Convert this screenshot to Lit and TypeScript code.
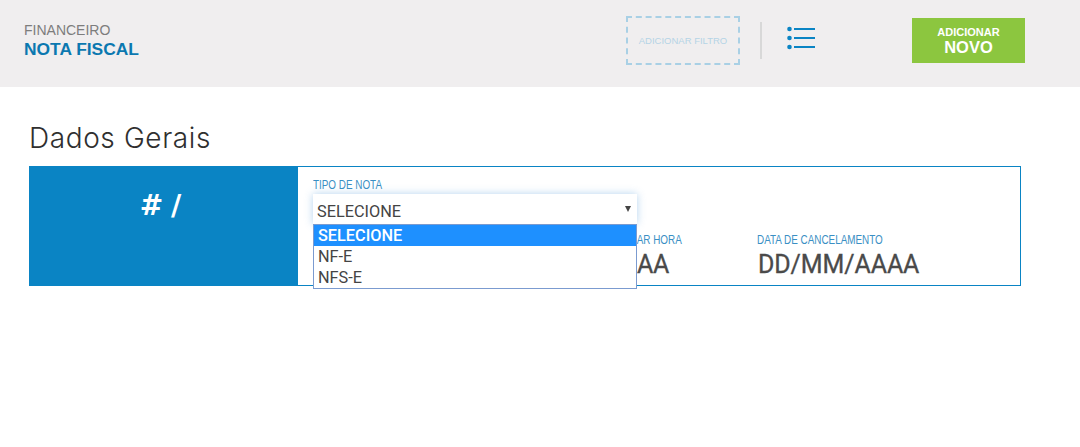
import { LitElement, html, css } from "lit";
import { customElement } from "lit/decorators.js";

@customElement("app-root")
export class AppRoot extends LitElement {
  static styles = css`
    :host { display: block; width: 1080px; height: 447px; background: #fff; overflow: hidden; font-family: "Liberation Sans", Arial, sans-serif; }
    .top { height: 87px; background: #f0eeef; display: flex; align-items: flex-start; box-sizing: border-box; padding-left: 24px; }
    .crumb { width: 602px; padding-top: 23px; }
    .crumb .a { font-size: 14px; line-height: 15px; color: #7d7d7d; }
    .crumb .b { font-size: 17.4px; line-height: 22px; font-weight: 700; color: #0b78b0; }
    .filter { margin-top: 16px; width: 114px; height: 49px; box-sizing: border-box; border: 2px dashed #a9d0e5; display: flex; align-items: center; justify-content: center; font-size: 9.5px; color: #b5d4e6; }
    .sep { margin: 22px 0 0 20px; width: 2px; height: 37px; background: #d8d8d8; }
    .list { margin: 26px 0 0 25px; display: block; }
    .add { margin: 18px 0 0 97px; width: 113px; height: 45px; background: #8cc63f; color: #fff; font-weight: 700; text-align: center; display: flex; flex-direction: column; justify-content: center; }
    .add .s { font-size: 11px; line-height: 13px; }
    .add .l { font-size: 16.5px; line-height: 16px; }
    h1 { margin: 35px 0 0 29px; font: 300 28px/32px "Inter", sans-serif; color: #2f2f2f; letter-spacing: 0.6px; height: 44px; }
    .card { margin-left: 29px; width: 992px; height: 120px; box-sizing: border-box; border: 1px solid #0a84c4; display: flex; }
    .id { width: 263px; padding-right: 6px; background: #0a84c4; margin: -1px 0 -1px -1px; color: #fff; font: 700 28px/34px "DejaVu Sans", sans-serif; text-align: center; padding-top: 23px; height: 97px; box-sizing: content-box; word-spacing: -2px; }
    .main { position: relative; flex: 1; padding: 11px 0 0 15px; }
    .label { font: 13px/14px "Liberation Sans", sans-serif; color: #3a8fc4; white-space: nowrap; transform: scaleX(0.76); transform-origin: left center; }
    .select { position: relative; margin-top: 2px; width: 324px; height: 30px; box-sizing: border-box; background: #fff; padding: 8px 0 0 3px; font: 16.3px/20px "Roboto", sans-serif; color: #444; box-shadow: 0 0 8px rgba(90,160,220,.45); text-indent: 1px; }
    .select::after { content: ""; position: absolute; right: 6px; top: 12px; border: 3.5px solid transparent; border-top: 6px solid #444; border-bottom: 0; }
    .drop { position: absolute; left: 15px; top: 57px; width: 324px; box-sizing: border-box; border: 1px solid #7b9bd0; background: #fff; font: 16.3px/21px "Roboto", sans-serif; color: #444; z-index: 2; }
    .drop div { padding-left: 4px; height: 21px; }
    .drop .on { background: #1e90ff; color: #fff; font-weight: 500; }
    .row { display: flex; margin-top: 9px; padding-left: 194px; }
    .f1 { width: 250px; }
    .value { font: 400 25px/28px "Roboto", sans-serif; color: #4a4a4a; letter-spacing: -0.1px; margin-top: 4px; margin-left: 1px; white-space: nowrap; -webkit-text-stroke: 0.3px #4a4a4a; }
  `;

  render() {
    return html`
      <div class="top">
        <div class="crumb"><div class="a">FINANCEIRO</div><div class="b">NOTA FISCAL</div></div>
        <div class="filter">ADICIONAR FILTRO</div>
        <div class="sep"></div>
        <svg class="list" width="28" height="24" viewBox="0 0 28 24" fill="#0a84c4">
          <circle cx="2.5" cy="3" r="2.3"/><circle cx="2.5" cy="12" r="2.3"/><circle cx="2.5" cy="21" r="2.3"/>
          <rect x="7" y="2" width="21" height="2"/><rect x="7" y="11" width="21" height="2"/><rect x="7" y="20" width="21" height="2"/>
        </svg>
        <div class="add"><div class="s">ADICIONAR</div><div class="l">NOVO</div></div>
      </div>
      <h1>Dados Gerais</h1>
      <div class="card">
        <div class="id"># /</div>
        <div class="main">
          <div class="label">TIPO DE NOTA</div>
          <div class="select">SELECIONE</div>
          <div class="drop"><div class="on">SELECIONE</div><div>NF-E</div><div>NFS-E</div></div>
          <div class="row">
            <div class="f1"><div class="label">DATA DE EMISSÃO E&nbsp; LANÇAR HORA</div><div class="value">DD/MM/AAAA</div></div>
            <div><div class="label">DATA DE CANCELAMENTO</div><div class="value">DD/MM/AAAA</div></div>
          </div>
        </div>
      </div>
    `;
  }
}
